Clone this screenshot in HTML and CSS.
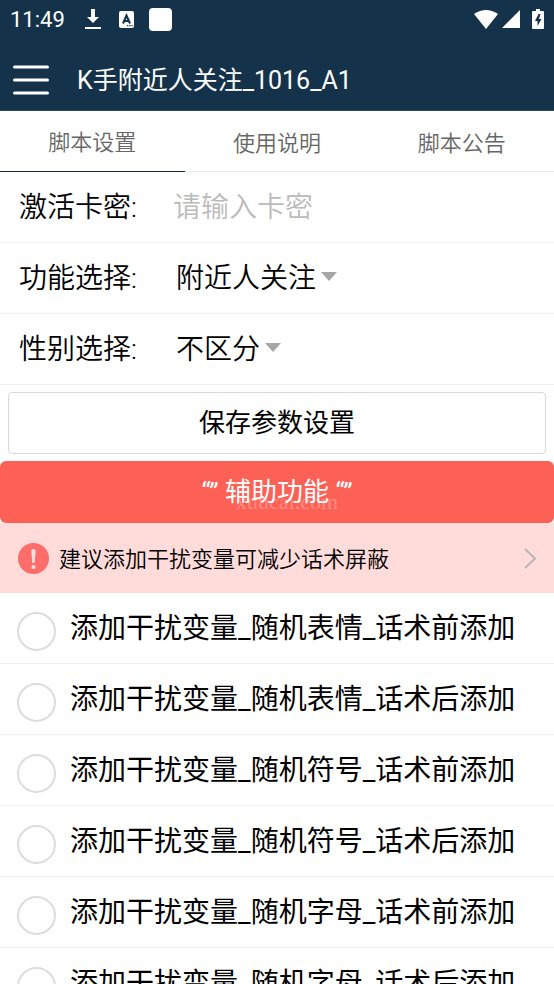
FILE: index.html
```html
<!DOCTYPE html>
<html lang="zh-CN">
<head>
<meta charset="utf-8">
<meta name="viewport" content="width=device-width, initial-scale=1">
<title>K手附近人关注_1016_A1</title>
<link rel="stylesheet" href="styles.css">
</head>
<body>
<header class="top">
  <div class="status">
    <span class="clock">11:49</span>
    <svg class="ic-download" viewBox="0 0 16 22" width="16" height="22" fill="#fff"><path d="M6 1h4v8h4l-6 6-6-6h4z"/><path d="M0 19h16v2H0z"/></svg>
    <svg class="ic-lang" viewBox="0 0 15 17" width="15" height="17"><rect width="15" height="17" rx="2" fill="#fff"/><path d="M4 12.500L7.500 4.500L11 12.500M5.500 10H9.500" fill="none" stroke="#15324b" stroke-width="2"/><path d="M8 14h1.300v1.300H8zM10.200 14h1.300v1.300h-1.300zM12.400 14h1.300v1.300h-1.300z" fill="#15324b"/></svg>
    <span class="blank-app"></span>
    <span class="signals">
      <svg viewBox="0 0 24 19" width="24" height="19" fill="#fff"><path d="M0 4Q12-4 24 4L12 19z"/></svg>
      <svg viewBox="0 0 18 18" width="18" height="18" fill="#fff"><path d="M18 0v18H0z"/></svg>
      <svg class="ic-battery" viewBox="0 0 12 20" width="12" height="20"><path d="M4 0h4v2h3q1 0 1 1v16q0 1-1 1H1q-1 0-1-1V3q0-1 1-1h3z" fill="#fff"/><path d="M6.500 5L3 12h2.500v5L9.500 10H7l1.500-5z" fill="#15324b"/></svg>
    </span>
  </div>
  <div class="appbar">
    <button class="menu" type="button" aria-label="菜单"><svg viewBox="0 0 36 30" width="36" height="30" stroke="#fff" stroke-width="3" stroke-linecap="round"><path d="M1.500 2h33M1.500 15h33M1.500 28h33"/></svg></button>
    <h1>K手附近人关注_1016_A1</h1>
  </div>
</header>
<nav class="tabs">
  <a class="tab active" href="#settings">脚本设置</a>
  <a class="tab" href="#help">使用说明</a>
  <a class="tab" href="#notice">脚本公告</a>
</nav>
<main id="settings">
  <div class="row field">
    <label for="key">激活卡密:</label>
    <input id="key" type="text" placeholder="请输入卡密">
  </div>
  <div class="row field">
    <label for="func">功能选择:</label>
    <span class="picker"><select id="func"><option>附近人关注</option></select></span>
  </div>
  <div class="row field">
    <label for="gender">性别选择:</label>
    <span class="picker"><select id="gender"><option>不区分</option><option>男</option><option>女</option></select></span>
  </div>
  <button class="save" type="button">保存参数设置</button>
  <button class="assist" type="button">“” 辅助功能 “”<span class="mark">xuucai.com</span></button>
  <a class="tip" href="#notice">
    <svg viewBox="0 0 31 31" width="31" height="31"><circle cx="15.500" cy="15.500" r="15.500" fill="#ff6d6a"/><path d="M13.300 8q0-2 2.200-2t2.200 2l-1 12h-2.400z" fill="#ffdbda"/><circle cx="15.500" cy="24" r="2" fill="#ffdbda"/></svg>
    <span class="tip-text">建议添加干扰变量可减少话术屏蔽</span>
    <svg viewBox="0 0 12 21" width="12" height="21" fill="none" stroke="#bdb5b5" stroke-width="2"><path d="M1 1l10 9.500L1 20"/></svg>
  </a>
  <div class="options">
    <label class="row option"><input type="checkbox"><span>添加干扰变量_随机表情_话术前添加</span></label>
    <label class="row option"><input type="checkbox"><span>添加干扰变量_随机表情_话术后添加</span></label>
    <label class="row option"><input type="checkbox"><span>添加干扰变量_随机符号_话术前添加</span></label>
    <label class="row option"><input type="checkbox"><span>添加干扰变量_随机符号_话术后添加</span></label>
    <label class="row option"><input type="checkbox"><span>添加干扰变量_随机字母_话术前添加</span></label>
    <label class="row option"><input type="checkbox"><span>添加干扰变量_随机字母_话术后添加</span></label>
  </div>
</main>
</body>
</html>
```
FILE: styles.css
```css
* { box-sizing: border-box; }
html, body { margin: 0; height: 100%; }
body {
  overflow: hidden;
  background: #fff;
  color: #000;
  font-family: Roboto, "Noto Sans CJK SC", sans-serif;
  font-size: 28px;
}
button, input, select { font: inherit; color: inherit; margin: 0; padding: 0; border: 0; background: none; }
a { color: inherit; text-decoration: none; }
svg { display: block; flex: none; }

.top { background: #15324b; color: #fff; border-bottom: 1px solid #2c4d69; }
.status { display: flex; align-items: center; height: 38px; padding: 0 10px; }
.clock { font-size: 22px; font-weight: 400; margin-right: 20px; }
.ic-download { margin-right: 18px; }
.ic-lang { margin-right: 15px; }
.blank-app { width: 23px; height: 23px; border-radius: 4px; background: #fff; }
.signals { display: flex; align-items: center; gap: 4px; margin-left: auto; }
.ic-battery { margin-left: 8px; }
.appbar { display: flex; align-items: center; gap: 28px; height: 72px; padding: 12px 13px 0; }
.menu { flex: none; }
h1 { margin: 0; padding-bottom: 4px; font-size: 25px; font-weight: 400; white-space: nowrap; }

.tabs { display: flex; height: 61px; border-bottom: 1px solid #e8e8e8; color: #666; font-size: 22px; font-weight: 350; }
.tab { flex: 1; display: flex; align-items: center; justify-content: center; height: 61px; padding-bottom: 2px; }
.tab.active { border-bottom: 1px solid #15283a; }

.row { display: flex; align-items: center; height: 71px; border-bottom: 1px solid #f0f0f0; }
.field { padding: 0 19px; font-weight: 350; }
.field label { flex: none; width: 154px; padding-bottom: 4px; }
.field input { flex: 1; min-width: 0; outline: 0; }
.field input::placeholder { color: #bbb; opacity: 1; }
.picker { display: flex; align-items: center; gap: 4px; padding-left: 3px; }
.picker select { appearance: none; outline: 0; }
.picker::after { content: ""; margin-bottom: 4px; border: 8px solid transparent; border-top: 9px solid #a6a6a6; border-bottom: 0; }

.save, .assist { display: block; height: 62px; padding-bottom: 6px; font-size: 26px; }
.save { width: calc(100% - 16px); margin: 7px 8px; border: 1px solid #d9d9d9; border-radius: 4px; }
.assist { position: relative; width: 100%; border-radius: 6px; background: #fd6156; color: #fff; }
.mark {
  position: absolute; left: 0; right: 0; bottom: 10px; padding-left: 20px;
  font: 22px/22px "Liberation Serif", serif; color: #fff; opacity: .25;
}

.tip { display: flex; align-items: center; gap: 10px; height: 70px; padding: 0 18px; background: #ffdbda; font-size: 22px; font-weight: 350; }
.tip-text { flex: 1; padding-bottom: 2px; white-space: nowrap; }

.option { gap: 14px; padding: 0 17px; white-space: nowrap; }
.option span { padding-bottom: 4px; }
.option input { appearance: none; flex: none; width: 39px; height: 39px; margin-top: 6px; border: 2px solid #ddd; border-radius: 50%; }
.option input:checked { background: #fd6156; }
```
